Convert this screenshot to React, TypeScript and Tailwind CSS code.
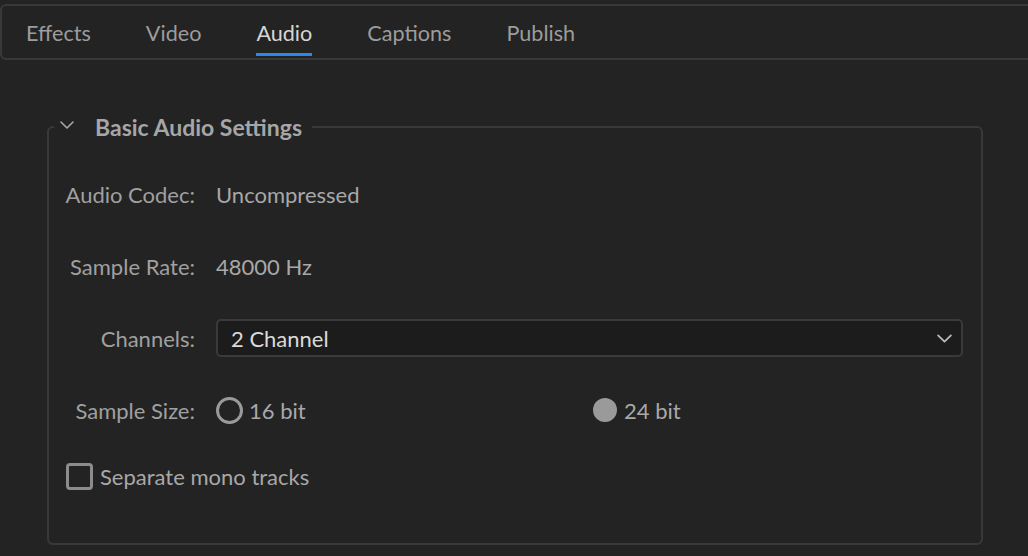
import React from 'react';

const tabs = ['Effects', 'Video', 'Audio', 'Captions', 'Publish'];

const Chevron: React.FC<{ className?: string }> = ({ className }) => (
  <svg viewBox="0 0 14 8" className={className} fill="none" stroke="currentColor" strokeWidth="1.6" strokeLinecap="round" strokeLinejoin="round">
    <path d="M1 1l6 6 6-6" />
  </svg>
);

const App: React.FC = () => {
  return (
    <div className="w-[1028px] h-[556px] overflow-hidden bg-[#232323] pt-[4px] font-['Lato','Liberation_Sans',sans-serif]">
      {/* Tab bar */}
      <div className="h-[56px] border-y-2 border-l-2 border-[#383838] rounded-l-[6px] flex pl-[24px] gap-[55px]">
        {tabs.map((tab) => (
          <div key={tab} className="relative flex items-center text-[21.6px] pt-[2px]">
            <span className={tab === 'Audio' ? 'text-[#d6d6d6]' : 'text-[#9c9c9c]'}>{tab}</span>
            {tab === 'Audio' && <div className="absolute left-0 right-0 bottom-[2px] h-[3px] bg-[#2d86ec]" />}
          </div>
        ))}
      </div>

      {/* Basic Audio Settings group */}
      <fieldset className="ml-[47px] mt-[52px] w-[936px] h-[433px] border-2 border-[#393939] rounded-[6px] pt-[33px]">
        <legend className="ml-[5px] h-[30px] pl-[6px] pr-[10px] flex items-center gap-[21px] text-[#a6a6a6]">
          <Chevron className="w-[14px] h-[8px] mb-[4px]" />
          <span className="text-[23px] font-bold">Basic Audio Settings</span>
        </legend>

        <div className="grid grid-cols-[146px_747px] gap-x-[21px] gap-y-[34px] text-[22px] text-[#a0a0a0]">
          <div className="h-[38px] flex items-center justify-end">Audio Codec:</div>
          <div className="h-[38px] flex items-center text-[#a8a8a8]">Uncompressed</div>

          <div className="h-[38px] flex items-center justify-end">Sample Rate:</div>
          <div className="h-[38px] flex items-center text-[#a8a8a8]">48000 Hz</div>

          <div className="h-[38px] flex items-center justify-end">Channels:</div>
          <div className="h-[38px] flex items-center justify-between pl-[13px] pr-[9px] bg-[#1c1c1c] border-2 border-[#3a3a3a] rounded-[5px]">
            <span className="text-[#dadada]">2 Channel</span>
            <Chevron className="w-[15px] h-[9px] text-[#bdbdbd]" />
          </div>

          <div className="h-[38px] flex items-center justify-end">Sample Size:</div>
          <div className="h-[38px] grid grid-cols-[377px_1fr] items-center text-[#a8a8a8]">
            <label className="flex items-center gap-[6px]">
              <span className="w-[27px] h-[27px] rounded-full border-[3px] border-[#9a9a9a]" />
              16 bit
            </label>
            <label className="flex items-center gap-[7px]">
              <span className="w-[24px] h-[24px] rounded-full bg-[#9a9a9a]" />
              24 bit
            </label>
          </div>
        </div>

        <label className="mt-[28px] ml-[17px] h-[38px] flex items-center gap-[7px] text-[22px] text-[#a8a8a8]">
          <span className="w-[27px] h-[27px] rounded-[4px] border-[3px] border-[#8c8c8c]" />
          Separate mono tracks
        </label>
      </fieldset>
    </div>
  );
};

export default App;
